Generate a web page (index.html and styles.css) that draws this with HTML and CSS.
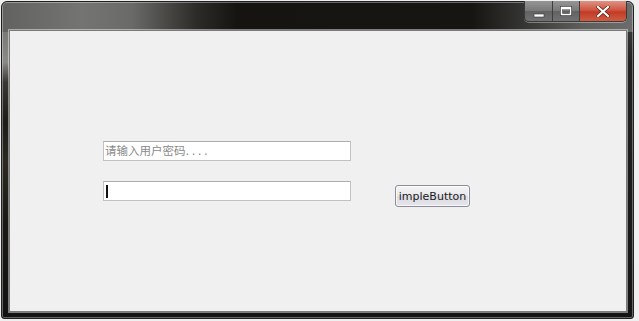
FILE: index.html
```html
<!DOCTYPE html>
<html>
<head>
<meta charset="utf-8">
<link rel="stylesheet" href="styles.css">
</head>
<body>
<div class="window">
  <div class="titlebar">
    <div class="caption-buttons">
      <div class="cbtn cbtn-min"><svg width="12" height="10" viewBox="0 0 12 10"><rect x="1" y="6" width="10" height="3" fill="#fff" stroke="#333" stroke-width="0.6"/></svg></div>
      <div class="cbtn cbtn-max"><svg width="12" height="10" viewBox="0 0 12 10"><rect x="1.5" y="1.5" width="9" height="7" fill="none" stroke="#333" stroke-width="3"/><rect x="1.5" y="1.5" width="9" height="7" fill="none" stroke="#fff" stroke-width="1.6"/><rect x="1.5" y="1.2" width="9" height="2" fill="#fff"/></svg></div>
      <div class="cbtn cbtn-close"><svg width="14" height="11" viewBox="0 0 14 11"><path d="M2 1 L12 10 M12 1 L2 10" stroke="#5a1a10" stroke-width="3.6" stroke-linecap="square"/><path d="M2 1 L12 10 M12 1 L2 10" stroke="#fff" stroke-width="2.2" stroke-linecap="square"/></svg></div>
    </div>
  </div>
  <div class="client">
    <div class="form">
      <div class="fields">
        <div class="field"><span class="placeholder">请输入用户密码<span class="dots">....</span></span></div>
        <div class="row">
          <div class="field"><span class="caret"></span></div>
          <div class="button">impleButton</div>
        </div>
      </div>
    </div>
  </div>
</div>
</body>
</html>
```
FILE: styles.css
```css
html, body {
  margin: 0;
  padding: 0;
}
body {
  background: #efefef;
  width: 639px;
  height: 321px;
  overflow: hidden;
}
.window {
  margin: 1px 0 0 1px;
  width: 633px;
  height: 318px;
  box-sizing: border-box;
  padding: 0 6px 6px 7px;
  border-radius: 6px 6px 3px 3px;
  border: 1px solid #202020;
  box-shadow: inset 0 0 0 1px rgba(255,255,255,0.35);
  background:
    linear-gradient(to right, #626260 0px, #747472 80px, #6a6a68 130px, #2c2b28 195px, #151411 235px, #161512 470px, #3a3a38 530px, #5e5e5c 580px, #6c6c6c 632px) top / 100% 30px no-repeat,
    linear-gradient(to bottom, #6a6a68 0px, #8a8a88 60px, #3a3834 80px, #1d1c18 120px, #2b2920 160px, #1a1916 220px, #111 318px) left / 8px 100% no-repeat,
    linear-gradient(to bottom, #4a4a48 0px, #222 60px, #141414 318px);
  display: flex;
  flex-direction: column;
}
.titlebar {
  height: 28px;
  flex: none;
  display: flex;
  justify-content: flex-end;
  align-items: flex-start;
}
.caption-buttons {
  display: flex;
  margin-right: 0;
  margin-top: -1px;
  height: 20px;
  border: 1px solid #3a3a3a;
  border-top: none;
  border-radius: 0 0 5px 5px;
  overflow: hidden;
  box-shadow: 0 1px 0 rgba(255,255,255,0.35);
}
.cbtn {
  display: flex;
  align-items: center;
  justify-content: center;
  height: 20px;
}
.cbtn-min {
  width: 27px;
  background: linear-gradient(to bottom, #959595, #787878 50%, #626262 51%, #717171);
  border-right: 1px solid #3e3e3e;
}
.cbtn-min svg {
  margin-top: 3px;
}
.cbtn-max {
  width: 26px;
  background: linear-gradient(to bottom, #959595, #787878 50%, #626262 51%, #717171);
  border-right: 1px solid #3e3e3e;
}
.cbtn-close {
  width: 46px;
  background: linear-gradient(to bottom, #df9282, #cf5642 45%, #c13c26 55%, #cf5c42);
}
.client {
  flex: 1;
  background: #f0f0f0;
  border: 1px solid #7a7a7a;
  box-shadow: 0 0 0 1px rgba(255,255,255,0.45);
  padding: 110px 0 0 93px;
}
.fields {
  display: flex;
  flex-direction: column;
  gap: 20px;
}
.row {
  display: flex;
  align-items: flex-start;
  gap: 44px;
}
.field {
  width: 248px;
  height: 20px;
  box-sizing: border-box;
  background: #fff;
  border: 1px solid #c2c2c2;
  border-top-color: #abadb3;
  display: flex;
  align-items: center;
  padding-left: 1px;
}
.placeholder {
  font-family: "Noto Sans CJK SC", sans-serif;
  font-size: 11.5px;
  color: #8a8a8a;
  line-height: 1;
}
.dots {
  letter-spacing: 2.5px;
  font-family: "DejaVu Sans", sans-serif;
}
.caret {
  display: block;
  width: 2px;
  height: 13px;
  background: #111;
  margin-left: 1px;
}
.button {
  margin-top: 4px;
  width: 75px;
  height: 22px;
  box-sizing: border-box;
  border: 1px solid #8d8d99;
  border-radius: 3px;
  background: linear-gradient(to bottom, #f4f4f6, #e8e8ec 50%, #dcdce2 51%, #e4e4ea);
  box-shadow: inset 0 0 0 1px rgba(255,255,255,0.7);
  font-family: "DejaVu Sans", sans-serif;
  font-size: 11px;
  color: #1a1a1a;
  display: flex;
  align-items: center;
  justify-content: center;
}
```
